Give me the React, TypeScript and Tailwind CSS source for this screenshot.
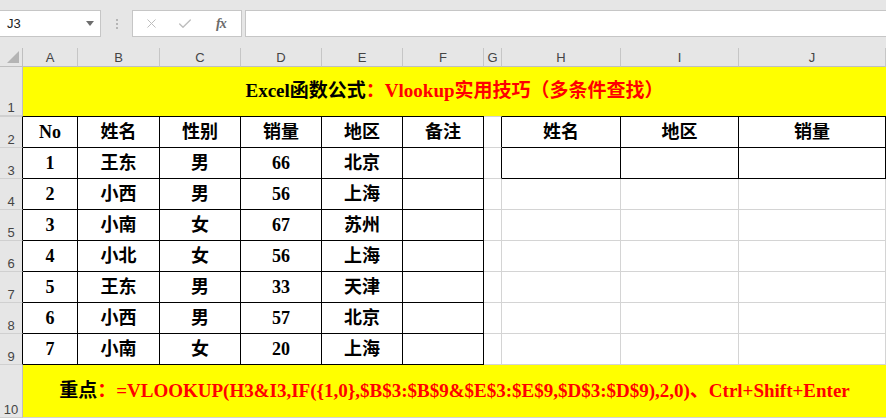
import { X, Check } from 'lucide-react';

const COLS = ['A', 'B', 'C', 'D', 'E', 'F', 'G', 'H', 'I', 'J'];

const LEFT_HEAD = ['No', '姓名', '性别', '销量', '地区', '备注'];
const RIGHT_HEAD = ['姓名', '地区', '销量'];

const ROWS: string[][] = [
  ['1', '王东', '男', '66', '北京', ''],
  ['2', '小西', '男', '56', '上海', ''],
  ['3', '小南', '女', '67', '苏州', ''],
  ['4', '小北', '女', '56', '上海', ''],
  ['5', '王东', '男', '33', '天津', ''],
  ['6', '小西', '男', '57', '北京', ''],
  ['7', '小南', '女', '20', '上海', ''],
];

const SERIF = "font-['Liberation_Serif','Noto_Sans_CJK_SC',serif]";

// row r: 2..9, col c: 1..10 (A..J)
function inTable(r: number, c: number) {
  const left = r >= 2 && r <= 9 && c >= 1 && c <= 6;
  const right = r >= 2 && r <= 3 && c >= 8 && c <= 10;
  return left || right;
}

function cellBorder(r: number, c: number) {
  const rightBlack = inTable(r, c) || inTable(r, c + 1);
  const bottomBlack = inTable(r, c) || inTable(r + 1, c);
  const topBlack = r === 2 && inTable(r, c);
  return [
    'border-r border-b',
    rightBlack ? 'border-r-black' : 'border-r-[#d4d4d4]',
    bottomBlack ? 'border-b-black' : 'border-b-[#d4d4d4]',
    r === 2 ? (topBlack ? 'border-t border-t-black' : 'border-t border-t-[#d4d4d4]') : '',
  ].join(' ');
}

function RowHead({ n }: { n: number }) {
  const black = n >= 2 && n <= 9;
  return (
    <div
      className={`bg-[#e6e6e6] border-b border-b-[#d0d0d0] border-r ${black ? 'border-r-black' : 'border-r-[#bfbfbf]'} ${n === 2 ? 'border-t border-t-[#d0d0d0]' : ''} flex items-end justify-center pb-[1px] text-[13px] leading-none text-[#444] font-['Liberation_Sans',sans-serif]`}
    >
      {n}
    </div>
  );
}

function Cell({ r, c, text }: { r: number; c: number; text?: string }) {
  return (
    <div
      className={`bg-white ${cellBorder(r, c)} flex items-center justify-center text-[18px] font-bold text-black ${SERIF}`}
    >
      {text}
    </div>
  );
}

function Toolbar() {
  return (
    <div className="h-[48px] bg-[#e6e6e6] flex items-start pt-[10px]">
      <div className="w-[101px] h-[27px] bg-white border border-[#c6c6c6] border-l-0 flex items-center justify-between pl-[7px] pr-[6px]">
        <span className="text-[13px] text-[#222] font-['Liberation_Sans',sans-serif]">J3</span>
        <svg width="8" height="5" viewBox="0 0 8 5">
          <path d="M0 0 L8 0 L4 5 Z" fill="#6d6d6d" />
        </svg>
      </div>
      <div className="w-[31px] h-[27px] flex flex-col items-center justify-center gap-[2px]">
        <span className="w-[2px] h-[2px] bg-[#b5b5b5]" />
        <span className="w-[2px] h-[2px] bg-[#b5b5b5]" />
        <span className="w-[2px] h-[2px] bg-[#b5b5b5]" />
      </div>
      <div className="w-[110px] h-[27px] bg-white border border-[#c6c6c6] flex items-center">
        <X size={15} strokeWidth={1.6} className="text-[#bdbdbd] ml-[11px]" />
        <Check size={16} strokeWidth={2} className="text-[#bdbdbd] ml-[18px]" />
        <span className="ml-[23px] text-[14px] italic font-bold text-[#6b6b6b] font-['Liberation_Serif',serif] tracking-[-1px]">
          fx
        </span>
      </div>
      <div className="flex-1 ml-[3px] h-[27px] bg-white border border-[#c6c6c6] border-r-0" />
    </div>
  );
}

export default function App() {
  return (
    <div className="w-[886px] h-[418px] overflow-hidden bg-white">
      <Toolbar />
      <div className="grid grid-cols-[23px_55px_82px_81px_81px_81px_81px_18px_119px_118px_1fr] grid-rows-[19px_49px_32px_repeat(7,31px)_53px]">
        {/* column headers */}
        <div className="bg-[#e6e6e6] border-r border-r-[#bfbfbf] border-b border-b-[#bfbfbf] flex items-end justify-end pr-[3px] pb-[3px]">
          <svg width="12" height="12" viewBox="0 0 12 12">
            <path d="M12 0 L12 12 L0 12 Z" fill="#b4b4b4" />
          </svg>
        </div>
        {COLS.map((col) => (
          <div
            key={col}
            className="bg-[#e6e6e6] border-r border-r-[#c6c6c6] border-b border-b-[#bfbfbf] flex items-end justify-center pb-[2px] text-[13px] leading-none text-[#444] font-['Liberation_Sans',sans-serif]"
          >
            {col}
          </div>
        ))}

        {/* row 1 */}
        <RowHead n={1} />
        <div className={`col-span-10 bg-[#ffff00] flex items-center justify-center text-[19px] font-bold whitespace-nowrap ${SERIF}`}>
          <span className="text-black">Excel函数公式</span>
          <span className="text-[#ff0000]">：Vlookup实用技巧（多条件查找）</span>
        </div>

        {/* row 2 */}
        <RowHead n={2} />
        {LEFT_HEAD.map((t, i) => (
          <Cell key={i} r={2} c={i + 1} text={t} />
        ))}
        <Cell r={2} c={7} />
        {RIGHT_HEAD.map((t, i) => (
          <Cell key={'h' + i} r={2} c={i + 8} text={t} />
        ))}

        {/* rows 3-9 */}
        {ROWS.map((row, ri) => {
          const r = ri + 3;
          return [
            <RowHead key={'rh' + r} n={r} />,
            ...row.map((t, ci) => <Cell key={r + '-' + ci} r={r} c={ci + 1} text={t} />),
            ...[7, 8, 9, 10].map((c) => <Cell key={r + '-' + c} r={r} c={c} />),
          ];
        })}

        {/* row 10 */}
        <RowHead n={10} />
        <div className={`col-span-10 bg-[#ffff00] border-b border-b-[#d4d4d4] flex items-center justify-center text-[19px] font-bold whitespace-nowrap ${SERIF}`}>
          <span className="text-black">重点</span>
          <span className="text-[#ff0000]">：=VLOOKUP(H3&amp;I3,IF({'{'}1,0{'}'},$B$3:$B$9&amp;$E$3:$E$9,$D$3:$D$9),2,0)、Ctrl+Shift+Enter</span>
        </div>
      </div>
    </div>
  );
}
